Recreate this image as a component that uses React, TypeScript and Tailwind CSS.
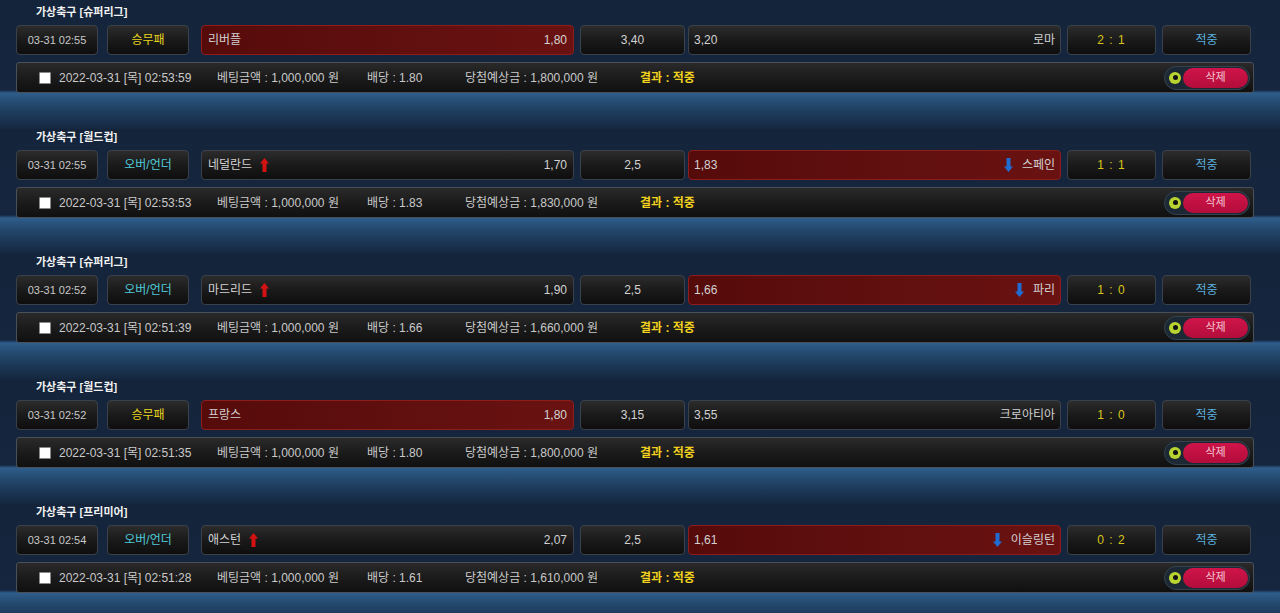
import React from "react";

type Bet = {
  league: string;
  time: string;
  type: "승무패" | "오버/언더";
  home: string;
  homeOdd: string;
  draw: string;
  away: string;
  awayOdd: string;
  pick: "home" | "away";
  arrows: boolean;
  score: string;
  betTime: string;
  odd: string;
  win: string;
};

const bets: Bet[] = [
  { league: "슈퍼리그", time: "03-31 02:55", type: "승무패", home: "리버플", homeOdd: "1,80", draw: "3,40", away: "로마", awayOdd: "3,20", pick: "home", arrows: false, score: "2 : 1", betTime: "2022-03-31 [목] 02:53:59", odd: "1.80", win: "1,800,000" },
  { league: "월드컵", time: "03-31 02:55", type: "오버/언더", home: "네덜란드", homeOdd: "1,70", draw: "2,5", away: "스페인", awayOdd: "1,83", pick: "away", arrows: true, score: "1 : 1", betTime: "2022-03-31 [목] 02:53:53", odd: "1.83", win: "1,830,000" },
  { league: "슈퍼리그", time: "03-31 02:52", type: "오버/언더", home: "마드리드", homeOdd: "1,90", draw: "2,5", away: "파리", awayOdd: "1,66", pick: "away", arrows: true, score: "1 : 0", betTime: "2022-03-31 [목] 02:51:39", odd: "1.66", win: "1,660,000" },
  { league: "월드컵", time: "03-31 02:52", type: "승무패", home: "프랑스", homeOdd: "1,80", draw: "3,15", away: "크로아티아", awayOdd: "3,55", pick: "home", arrows: false, score: "1 : 0", betTime: "2022-03-31 [목] 02:51:35", odd: "1.80", win: "1,800,000" },
  { league: "프리미어", time: "03-31 02:54", type: "오버/언더", home: "애스턴", homeOdd: "2,07", draw: "2,5", away: "이슬링턴", awayOdd: "1,61", pick: "away", arrows: true, score: "0 : 2", betTime: "2022-03-31 [목] 02:51:28", odd: "1.61", win: "1,610,000" },
];

const font = { fontFamily: '"Liberation Sans", "Noto Sans CJK KR", sans-serif' };

const darkBox =
  "h-[30px] rounded-[4px] border border-[#3b414b] bg-[linear-gradient(180deg,#2c2c2c_0%,#1a1a1a_50%,#0e0e0e_100%)] flex items-center";
const redBox =
  "h-[30px] rounded-[4px] border border-[#8e1c1c] bg-[linear-gradient(90deg,#560b0b_0%,#6a1212_100%)] flex items-center";

function UpArrow() {
  return (
    <svg width="9" height="14" viewBox="0 0 9 14" className="ml-[8px]">
      <polygon points="4.5,0 9,5.5 6.5,5.5 6.5,14 2.5,14 2.5,5.5 0,5.5" fill="#d41212" />
    </svg>
  );
}

function DownArrow() {
  return (
    <svg width="9" height="14" viewBox="0 0 9 14" className="mr-[9px]">
      <polygon points="4.5,14 9,8.5 6.5,8.5 6.5,0 2.5,0 2.5,8.5 0,8.5" fill="#1f6cd2" />
    </svg>
  );
}

function DeleteButton() {
  return (
    <div className="flex items-center h-[24px] w-[86px] rounded-full bg-[#1c2833] border border-[#34424f] pl-[2px] pr-[1px]">
      <div className="w-[12px] h-[12px] rounded-full bg-[#b9d431] flex items-center justify-center shrink-0 ml-[2px]">
        <div className="w-[5px] h-[5px] rounded-full bg-[#111]" />
      </div>
      <div className="flex-1 h-[20px] ml-[2px] rounded-full bg-[linear-gradient(180deg,#cf1449_0%,#b30d3b_100%)] flex items-center justify-center text-[11px] text-[#f3c6d3]">
        삭제
      </div>
    </div>
  );
}

function Block({ b }: { b: Bet }) {
  const homeRed = b.pick === "home";
  return (
    <div className="h-[125px] bg-[linear-gradient(180deg,#14243b_0px,#15263e_86px,#2f5e8c_89px,#2a5580_93px,#224669_102px,#1b3655_113px,#15273f_125px)]">
      <div className="h-[16px] pl-[36px] flex items-center text-[11px] font-bold text-[#f2f2f2]">
        가상축구 [{b.league}]
      </div>
      <div className="mt-[5px] flex pl-[16px] text-[12px] text-[#d2d2d2]">
        <div className={`${darkBox} w-[82px] justify-center text-[11px] text-[#c8c8c8]`}>{b.time}</div>
        <div
          className={`${darkBox} w-[82px] ml-[9px] justify-center ${
            b.type === "승무패" ? "text-[#e8d41c]" : "text-[#4ec9d9]"
          }`}
        >
          {b.type}
        </div>
        <div className={`${homeRed ? redBox : darkBox} w-[373px] ml-[12px] px-[6px]`}>
          <span>{b.home}</span>
          {b.arrows && <UpArrow />}
          <span className="ml-auto">{b.homeOdd}</span>
        </div>
        <div className={`${darkBox} w-[105px] ml-[6px] justify-center`}>{b.draw}</div>
        <div className={`${homeRed ? darkBox : redBox} w-[373px] ml-[3px] px-[5px]`}>
          <span>{b.awayOdd}</span>
          <span className="ml-auto flex items-center">
            {b.arrows && <DownArrow />}
            <span>{b.away}</span>
          </span>
        </div>
        <div className={`${darkBox} w-[89px] ml-[6px] justify-center text-[#d8c41a] tracking-[1px]`}>
          {b.score}
        </div>
        <div className={`${darkBox} w-[89px] ml-[6px] justify-center text-[#5aaede]`}>적중</div>
      </div>
      <div className="mt-[7px] ml-[16px] w-[1238px] h-[31px] rounded-[3px] border border-[#4a5058] bg-[linear-gradient(180deg,#2a2a2a_0%,#1b1b1b_50%,#101010_100%)] flex items-center text-[12px] text-[#c9c9c9]">
        <div className="ml-[22px] w-[12px] h-[12px] bg-white border border-[#888] rounded-[1px] shrink-0" />
        <span className="ml-[8px] w-[158px]">{b.betTime}</span>
        <span className="w-[150px]">베팅금액 : 1,000,000 원</span>
        <span className="w-[98px]">배당 : {b.odd}</span>
        <span className="w-[175px]">당첨예상금 : {b.win} 원</span>
        <span className="font-bold text-[#f2d21e]">결과 : 적중</span>
        <div className="ml-auto mr-[3px]">
          <DeleteButton />
        </div>
      </div>
    </div>
  );
}

export default function App() {
  return (
    <div className="w-[1280px] h-[613px] overflow-hidden bg-[#14243b] pt-[4px]" style={font}>
      {bets.map((b, i) => (
        <Block key={i} b={b} />
      ))}
    </div>
  );
}
